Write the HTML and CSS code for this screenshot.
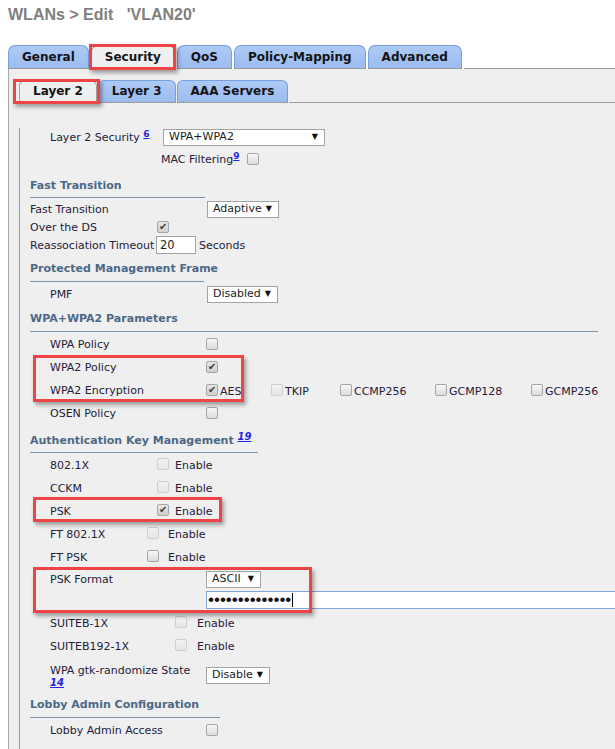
FILE: index.html
```html
<!DOCTYPE html>
<html>
<head>
<meta charset="utf-8">
<link rel="stylesheet" href="styles.css">
</head>
<body>
<div class="page">
  <h1 class="title">WLANs &gt; Edit &nbsp;&nbsp;'VLAN20'</h1>
  <div class="tabs main-tabs">
    <span class="tab">General</span>
    <span class="tab active">Security</span>
    <span class="tab">QoS</span>
    <span class="tab">Policy-Mapping</span>
    <span class="tab">Advanced</span>
    <span class="tab-fill"></span>
  </div>
  <div class="panel">
    <div class="tabs sub-tabs">
      <span class="tab sub active">Layer 2</span>
      <span class="tab sub">Layer 3</span>
      <span class="tab sub">AAA Servers</span>
      <span class="tab-fill"></span>
    </div>
    <div class="content">
      <div class="row r18 first">
        <span class="lbl in30 w143">Layer 2 Security <a class="sup">6</a></span>
        <span class="sel w162">WPA+WPA2<i class="arr">▼</i></span>
      </div>
      <div class="row r18 mac">
        <span class="lbl mac-lbl">MAC Filtering<a class="sup">9</a></span>
        <span class="cb mac-cb"></span>
      </div>

      <div class="sec sec-ft">Fast Transition</div>
      <div class="row r18 after-sec">
        <span class="lbl in10 w187">Fast Transition</span>
        <span class="sel w72">Adaptive<i class="arr">▼</i></span>
      </div>
      <div class="row r18">
        <span class="lbl in10 w137">Over the DS</span>
        <span class="cb checked"></span>
      </div>
      <div class="row r18">
        <span class="lbl in10 w136">Reassociation Timeout</span>
        <span class="txt-input">20</span>
        <span class="unit">Seconds</span>
      </div>

      <div class="sec sec-pmf">Protected Management Frame</div>
      <div class="row r18 after-pmf">
        <span class="lbl in30 w187">PMF</span>
        <span class="sel w71">Disabled<i class="arr">▼</i></span>
      </div>

      <div class="sec sec-wpa">WPA+WPA2 Parameters</div>
      <div class="row">
        <span class="lbl in30 w186">WPA Policy</span>
        <span class="cb"></span>
      </div>
      <div class="row">
        <span class="lbl in30 w186">WPA2 Policy</span>
        <span class="cb checked"></span>
      </div>
      <div class="row">
        <span class="lbl in30 w186">WPA2 Encryption</span>
        <span class="opt o65"><span class="cb checked"></span><span class="opt-txt">AES</span></span>
        <span class="opt o69"><span class="cb disabled"></span><span class="opt-txt">TKIP</span></span>
        <span class="opt o95"><span class="cb"></span><span class="opt-txt">CCMP256</span></span>
        <span class="opt o96"><span class="cb"></span><span class="opt-txt">GCMP128</span></span>
        <span class="opt"><span class="cb"></span><span class="opt-txt">GCMP256</span></span>
      </div>
      <div class="row">
        <span class="lbl in30 w186">OSEN Policy</span>
        <span class="cb"></span>
      </div>

      <div class="sec sec-akm">Authentication Key Management <a class="sup ital">19</a></div>
      <div class="row">
        <span class="lbl in30 w137">802.1X</span>
        <span class="cb disabled up"></span><span class="en en6">Enable</span>
      </div>
      <div class="row">
        <span class="lbl in30 w137">CCKM</span>
        <span class="cb disabled up"></span><span class="en en6">Enable</span>
      </div>
      <div class="row">
        <span class="lbl in30 w137">PSK</span>
        <span class="cb checked up"></span><span class="en en6">Enable</span>
      </div>
      <div class="row">
        <span class="lbl in30 w127">FT 802.1X</span>
        <span class="cb disabled up"></span><span class="en en9">Enable</span>
      </div>
      <div class="row">
        <span class="lbl in30 w127">FT PSK</span>
        <span class="cb up"></span><span class="en en9">Enable</span>
      </div>
      <div class="row r22">
        <span class="lbl in30 w186">PSK Format</span>
        <span class="sel w55">ASCII<i class="arr">▼</i></span>
      </div>
      <div class="row r20">
        <span class="pwd"><span class="dots">••••••••••••••</span><span class="caret"></span></span>
      </div>
      <div class="row suite">
        <span class="lbl in30 w155">SUITEB-1X</span>
        <span class="cb disabled up"></span><span class="en en10">Enable</span>
      </div>
      <div class="row">
        <span class="lbl in30 w155">SUITEB192-1X</span>
        <span class="cb disabled up"></span><span class="en en10">Enable</span>
      </div>
      <div class="row gtk">
        <span class="lbl in30 w186 two">WPA gtk-randomize State<br><a class="note">14</a></span>
        <span class="sel w64">Disable<i class="arr">▼</i></span>
      </div>

      <div class="sec sec-lobby">Lobby Admin Configuration</div>
      <div class="row">
        <span class="lbl in30 w186">Lobby Admin Access</span>
        <span class="cb"></span>
      </div>
    </div>
  </div>

  <div class="hl hl-security"></div>
  <div class="hl hl-layer2"></div>
  <div class="hl hl-wpa2"></div>
  <div class="hl hl-psk"></div>
  <div class="hl hl-pskfmt"></div>
</div>
</body>
</html>
```

FILE: styles.css
```css
html, body {
  margin: 0;
  padding: 0;
  overflow: hidden;
  background: #ffffff;
}

body {
  font-family: "DejaVu Sans", Verdana, sans-serif;
  font-size: 11px;
  color: #24203a;
}

.page {
  position: relative;
  padding-top: 4px;
  width: 615px;
  height: 749px;
  overflow: hidden;
}

.title {
  margin: 0 0 0 8px;
  font: bold 16px/22px "Liberation Sans", Arial, sans-serif;
  color: #7f7f7f;
}

/* tabs */
.tabs {
  display: flex;
  align-items: flex-end;
}

.main-tabs {
  margin: 19px 0 0 8px;
}

.tab {
  box-sizing: border-box;
  height: 24px;
  padding: 0 13px;
  margin-right: 2px;
  border: 1px solid #75a0da;
  border-bottom: 1px solid #9a9a9a;
  border-radius: 7px 7px 0 0;
  background: linear-gradient(#adc9f5, #9cbcf0);
  font: bold 12px/22px "DejaVu Sans", Verdana, sans-serif;
  color: #141414;
  white-space: nowrap;
}

.tab.active {
  background: #efefef;
  border-color: #a0a0a0;
  border-bottom-color: #efefef;
}

.tab.sub {
  height: 23px;
  line-height: 21px;
  margin-right: 1px;
  border-radius: 6px 6px 0 0;
}

.tab-fill {
  flex: 1;
  border-bottom: 1px solid #9a9a9a;
}

.panel {
  margin-left: 8px;
  background: #efefef;
  border-left: 1px solid #a8a8a8;
  padding: 11px 0 60px 10px;
}

.content {
  border-left: 1px solid #9a9a9a;
  padding-bottom: 20px;
}

/* rows */
.row {
  display: flex;
  align-items: center;
  height: 23px;
  line-height: 14px;
  white-space: nowrap;
}

.r18 { height: 18px; }
.r20 { height: 20px; }
.r22 { height: 22px; }

.first { margin-top: 25px; }
.mac { margin-top: 4px; }
.after-sec { margin-top: 2px; }
.after-pmf { margin-top: 3px; }
.suite { margin-top: 1px; }
.gtk { height: 24px; margin-top: 6px; }

.lbl {
  box-sizing: border-box;
  flex: none;
  position: relative;
  top: 1px;
}

.in10 { padding-left: 10px; }
.in30 { padding-left: 30px; }

.w127 { width: 127px; }
.w136 { width: 136px; }
.w137 { width: 137px; }
.w143 { width: 143px; }
.w155 { width: 155px; }
.w186 { width: 186px; }
.w187 { width: 187px; }

.mac-lbl { padding-left: 141px; }
.mac-cb { margin-left: 7px; }

.two {
  line-height: 12px;
  align-self: flex-start;
  top: 2px;
}

.sup {
  font-size: 9px;
  font-weight: bold;
  color: #2424e8;
  text-decoration: underline;
  vertical-align: 4px;
  line-height: 0;
}

.sup.ital {
  font-style: italic;
  font-size: 10px;
}

.note {
  font-size: 10px;
  font-weight: bold;
  font-style: italic;
  color: #2424e8;
  text-decoration: underline;
}

/* section headings */
.sec {
  margin-left: 10px;
  font-weight: bold;
  font-size: 11px;
  line-height: 14px;
  color: #4b6886;
  border-bottom: 1px solid #7d92a6;
  white-space: nowrap;
}

.sec-ft { width: 175px; margin-top: 11px; padding-bottom: 4px; }
.sec-pmf { width: 174px; margin-top: 8px; padding-bottom: 5px; }
.sec-wpa { width: 568px; margin-top: 9px; padding-bottom: 5px; }
.sec-akm { width: 228px; margin-top: 10px; padding-bottom: 4px; }
.sec-lobby { width: 190px; margin-top: 11px; padding-bottom: 5px; }

/* controls */
.sel {
  box-sizing: border-box;
  display: inline-flex;
  align-items: center;
  height: 17px;
  padding: 0 6px 0 5px;
  border: 1px solid #a3a3a3;
  background: #ffffff;
  font-size: 11px;
  color: #1c1c1c;
  flex: none;
}

.w162 { width: 162px; }
.w72 { width: 72px; }
.w71 { width: 71px; }
.w64 { width: 64px; }
.w55 { width: 55px; }

.arr {
  font-style: normal;
  font-size: 8px;
  margin-left: auto;
  padding-left: 4px;
  color: #111;
}

.txt-input {
  box-sizing: border-box;
  width: 40px;
  height: 18px;
  border: 1px solid #a3a3a3;
  background: #ffffff;
  padding-left: 3px;
  line-height: 16px;
  font-size: 11.5px;
  color: #1c1c1c;
}

.unit {
  margin-left: 3px;
  position: relative;
  top: 1px;
}

.cb {
  box-sizing: border-box;
  flex: none;
  display: inline-block;
  position: relative;
  width: 12px;
  height: 12px;
  border: 1px solid #a6a6a6;
  border-radius: 2px;
  background: linear-gradient(#f7f7f7, #dcdcdc);
}

.cb.checked {
  background: linear-gradient(#e6e6e6, #cfcfcf);
}

.cb.checked::after {
  content: "✔";
  position: absolute;
  left: 1px;
  top: -2px;
  font-size: 10px;
  line-height: 14px;
  color: #3a3a3a;
}

.cb.disabled {
  border-color: #cfcfcf;
  background: linear-gradient(#f2f2f2, #e6e6e6);
}

.cb.up { top: -1px; }

.en {
  color: #24203a;
  position: relative;
  top: 1px;
}
.en6 { margin-left: 6px; }
.en9 { margin-left: 9px; }
.en10 { margin-left: 10px; }

.opt {
  display: flex;
  align-items: center;
  flex: none;
}

.o65 { width: 65px; }
.o69 { width: 69px; }
.o95 { width: 95px; }
.o96 { width: 96px; }

.opt-txt {
  margin-left: 2px;
  position: relative;
  top: 2px;
}

.pwd {
  box-sizing: border-box;
  flex: none;
  display: flex;
  align-items: center;
  margin-left: 186px;
  width: 440px;
  height: 18px;
  border: 1px solid #80a6dc;
  background: #ffffff;
  padding-left: 1px;
}

.dots {
  font: 17px/16px "Liberation Sans", Arial, sans-serif;
  color: #111;
}

.caret {
  display: inline-block;
  width: 1px;
  height: 14px;
  background: #000;
  margin-left: 1px;
}

/* red highlight boxes drawn over the screenshot */
.hl {
  position: absolute;
  box-sizing: border-box;
  border: 3px solid #ef4446;
  box-shadow: 2px 3px 4px rgba(0, 0, 0, 0.35);
}

.hl-security { left: 89px; top: 44px; width: 87px; height: 26px; }
.hl-layer2 { left: 13px; top: 79px; width: 87px; height: 25px; }
.hl-wpa2 { left: 33px; top: 355px; width: 211px; height: 47px; }
.hl-psk { left: 33px; top: 497px; width: 189px; height: 25px; }
.hl-pskfmt { left: 33px; top: 567px; width: 279px; height: 46px; }
```
